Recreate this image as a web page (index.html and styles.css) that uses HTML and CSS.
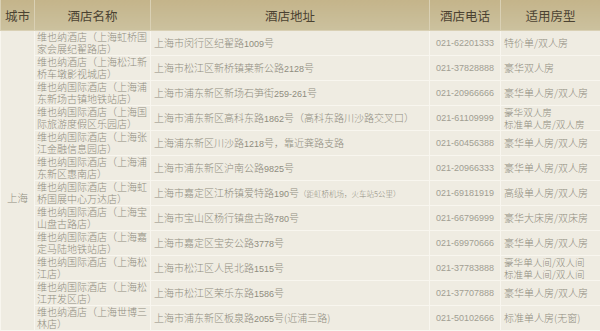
FILE: index.html
```html
<!DOCTYPE html>
<html lang="zh-CN">
<head>
<meta charset="utf-8">
<title>酒店列表</title>
<link rel="stylesheet" href="styles.css">
</head>
<body>
<table class="hotels">
  <colgroup>
    <col class="c-city"><col class="c-name"><col class="c-addr"><col class="c-tel"><col class="c-type">
  </colgroup>
  <thead>
    <tr><th>城市</th><th>酒店名称</th><th>酒店地址</th><th>酒店电话</th><th>适用房型</th></tr>
  </thead>
  <tbody>
    <tr>
      <td class="city" rowspan="12">上海</td>
      <td class="name">维也纳酒店（上海虹桥国家会展纪翟路店）</td>
      <td class="addr">上海市闵行区纪翟路<span class="num">1009</span>号</td>
      <td class="tel">021-62201333</td>
      <td class="type">特价单/双人房</td>
    </tr>
    <tr>
      <td class="name">维也纳酒店（上海松江新桥车墩影视城店）</td>
      <td class="addr">上海市松江区新桥镇枽新公路<span class="num">2128</span>号</td>
      <td class="tel">021-37828888</td>
      <td class="type">豪华双人房</td>
    </tr>
    <tr>
      <td class="name">维也纳国际酒店（上海浦东新场古镇地铁站店）</td>
      <td class="addr">上海市浦东新区新场石笋街<span class="num">259-261</span>号</td>
      <td class="tel">021-20966666</td>
      <td class="type">豪华单人房/双人房</td>
    </tr>
    <tr>
      <td class="name">维也纳国际酒店（上海国际旅游度假区乐园店）</td>
      <td class="addr">上海市浦东新区高科东路<span class="num">1862</span>号（高科东路川沙路交叉口）</td>
      <td class="tel">021-61109999</td>
      <td class="type two"><span class="ln">豪华双人房</span><span class="ln">标准单人房/双人房</span></td>
    </tr>
    <tr>
      <td class="name">维也纳国际酒店（上海张江金融信息园店）</td>
      <td class="addr">上海浦东新区川沙路<span class="num">1218</span>号，靠近龚路支路</td>
      <td class="tel">021-60456388</td>
      <td class="type">豪华单人房/双人房</td>
    </tr>
    <tr>
      <td class="name">维也纳国际酒店（上海浦东新区惠南店）</td>
      <td class="addr">上海市浦东新区沪南公路<span class="num">9825</span>号</td>
      <td class="tel">021-20966333</td>
      <td class="type">豪华单人房/双人房</td>
    </tr>
    <tr>
      <td class="name">维也纳国际酒店（上海虹桥国展中心万达店）</td>
      <td class="addr">上海市嘉定区江桥镇爱特路<span class="num">190</span>号<span class="small">（距虹桥机场，火车站5公里）</span></td>
      <td class="tel">021-69181919</td>
      <td class="type">高级单人房/双人房</td>
    </tr>
    <tr>
      <td class="name">维也纳国际酒店（上海宝山盘古路店）</td>
      <td class="addr">上海市宝山区杨行镇盘古路<span class="num">780</span>号</td>
      <td class="tel">021-66796999</td>
      <td class="type">豪华大床房/双床房</td>
    </tr>
    <tr>
      <td class="name">维也纳国际酒店（上海嘉定马陆地铁站店）</td>
      <td class="addr">上海市嘉定区宝安公路<span class="num">3778</span>号</td>
      <td class="tel">021-69970666</td>
      <td class="type">豪华单人房/双人房</td>
    </tr>
    <tr>
      <td class="name">维也纳国际酒店（上海松江店）</td>
      <td class="addr">上海市松江区人民北路<span class="num">1515</span>号</td>
      <td class="tel">021-37783888</td>
      <td class="type two"><span class="ln">豪华单人间/双人间</span><span class="ln">标准单人间/双人间</span></td>
    </tr>
    <tr>
      <td class="name">维也纳国际酒店（上海松江开发区店）</td>
      <td class="addr">上海市松江区荣乐东路<span class="num">1586</span>号</td>
      <td class="tel">021-37707888</td>
      <td class="type">豪华单人房/双人房</td>
    </tr>
    <tr>
      <td class="name">维也纳酒店（上海世博三林店）</td>
      <td class="addr">上海市浦东新区板泉路<span class="num">2055</span>号(近浦三路)</td>
      <td class="tel">021-50102666</td>
      <td class="type">标准单人房(无窗)</td>
    </tr>
  </tbody>
</table>
</body>
</html>
```
FILE: styles.css
```css
html, body {
  margin: 0;
  padding: 0;
  background: #efece2;
}

.hotels {
  width: 600px;
  border-collapse: collapse;
  table-layout: fixed;
  font-family: "Noto Sans CJK SC", "Liberation Sans", sans-serif;
  background: #efece2;
}

.c-city { width: 34px; }
.c-name { width: 116px; }
.c-addr { width: 279px; }
.c-tel { width: 71px; }
.c-type { width: 100px; }

.hotels th {
  height: 30px;
  padding: 0;
  font-size: 12.5px;
  font-weight: normal;
  color: #4b4232;
  text-align: center;
  background: linear-gradient(#c4b48a, #cbc19e);
  border: 1px solid #d9d0b4;
  border-top: none;
}

.hotels td {
  height: 24px;
  padding: 0 2px;
  font-size: 10px;
  font-weight: 300;
  line-height: 12px;
  color: #8f8c7f;
  border: 1px solid #f8f6ef;
  vertical-align: middle;
  overflow: hidden;
}

.hotels td.city {
  text-align: center;
  padding: 34px 0 0;
  font-size: 10.5px;
}

.hotels td.name {
  padding: 0 3px 0 2px;
}

.hotels td.addr {
  padding-left: 3px;
  white-space: nowrap;
}

.hotels td.tel {
  text-align: center;
  font-family: "Liberation Sans", sans-serif;
  font-size: 9px;
  font-weight: normal;
  color: #a19e92;
  padding: 0;
  white-space: nowrap;
}

.hotels td.type {
  padding-left: 3px;
  white-space: nowrap;
}

.hotels td.two {
  font-size: 9.6px;
}

.ln {
  display: block;
  height: 12px;
  line-height: 12px;
}

.num {
  font-family: "Liberation Sans", sans-serif;
  font-size: 9px;
  font-weight: normal;
}

.small {
  font-size: 7.5px;
}
```
